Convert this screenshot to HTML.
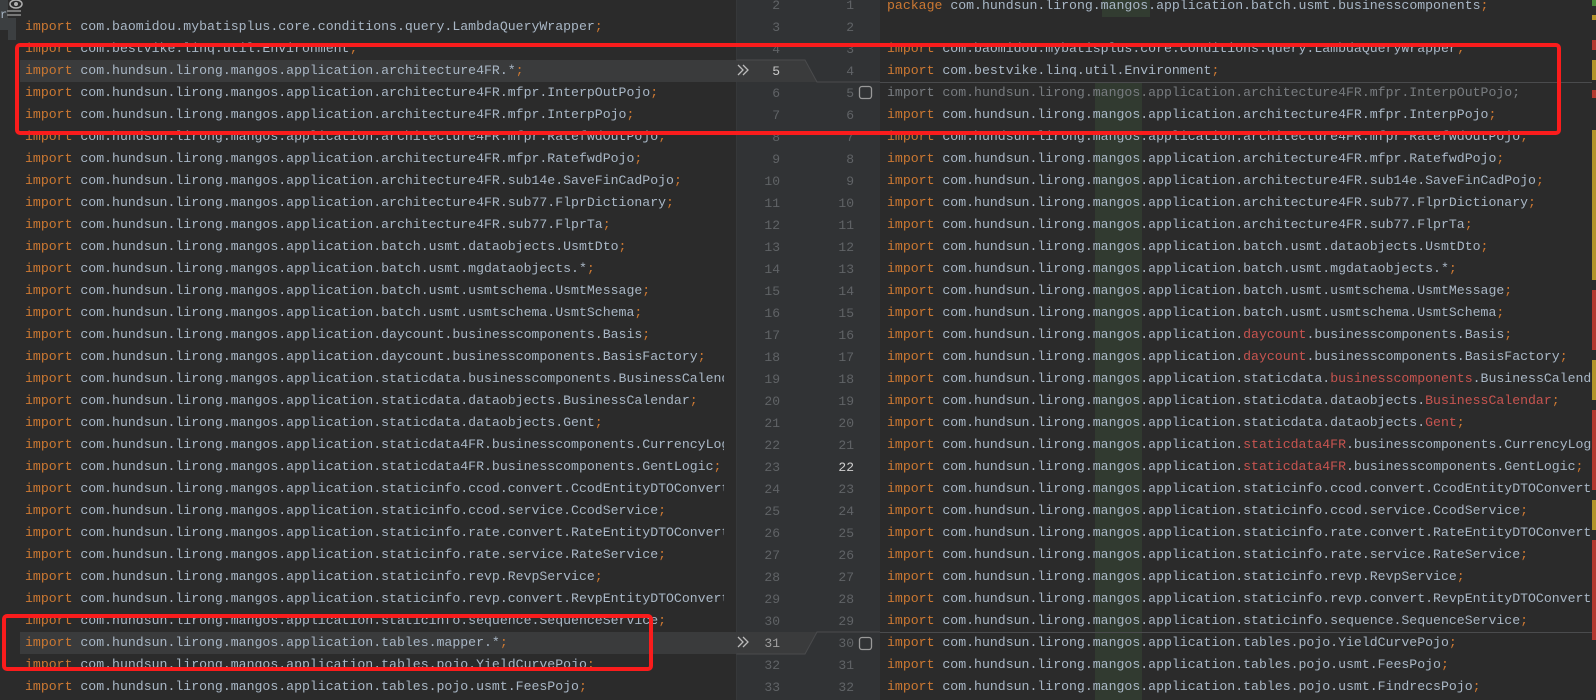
<!DOCTYPE html>
<html><head><meta charset="utf-8">
<style>
html,body{margin:0;padding:0}
body{width:1596px;height:700px;overflow:hidden;background:#2b2b2b;position:relative;font-family:"Liberation Mono",monospace;font-size:13.2px;color:#a9b7c6}
.pane{position:absolute;top:0;height:700px;overflow:hidden}
#L{left:0;width:736px;background:#2b2b2b}
#G{left:736px;width:144px;background:#313335}
#R{left:880px;width:712px;background:#2b2b2b}
.row{position:absolute;left:0;right:0;height:22px;line-height:22px;white-space:pre}
.k{color:#cc7832}.s{color:#cc7832}.r{color:#c75450}
.gray,.gray .k{color:#787c80}
.num{position:absolute;height:22px;line-height:22px;color:#606366;text-align:right;width:30px}
.hl{background:#3a3b3c}
.box{position:absolute;border:4px solid #fa1c1c;border-radius:5px;box-sizing:border-box}
.hline{position:absolute;height:1px;background:#4a4b4d}
</style></head><body>

<div class="pane" id="L">
<div style="position:absolute;left:20px;top:60px;width:716px;height:22px" class="hl"></div>
<div style="position:absolute;left:20px;top:632px;width:716px;height:22px" class="hl"></div>
<div style="position:absolute;left:25px;top:0;width:699px;height:700px;overflow:hidden">
<div class="row" style="top:16px"><span class="k">import</span> com.baomidou.mybatisplus.core.conditions.query.LambdaQueryWrapper<span class="s">;</span></div>
<div class="row" style="top:38px"><span class="k">import</span> com.bestvike.linq.util.Environment<span class="s">;</span></div>
<div class="row" style="top:60px"><span class="k">import</span> com.hundsun.lirong.mangos.application.architecture4FR.*<span class="s">;</span></div>
<div class="row" style="top:82px"><span class="k">import</span> com.hundsun.lirong.mangos.application.architecture4FR.mfpr.InterpOutPojo<span class="s">;</span></div>
<div class="row" style="top:104px"><span class="k">import</span> com.hundsun.lirong.mangos.application.architecture4FR.mfpr.InterpPojo<span class="s">;</span></div>
<div class="row" style="top:126px"><span class="k">import</span> com.hundsun.lirong.mangos.application.architecture4FR.mfpr.RatefwdOutPojo<span class="s">;</span></div>
<div class="row" style="top:148px"><span class="k">import</span> com.hundsun.lirong.mangos.application.architecture4FR.mfpr.RatefwdPojo<span class="s">;</span></div>
<div class="row" style="top:170px"><span class="k">import</span> com.hundsun.lirong.mangos.application.architecture4FR.sub14e.SaveFinCadPojo<span class="s">;</span></div>
<div class="row" style="top:192px"><span class="k">import</span> com.hundsun.lirong.mangos.application.architecture4FR.sub77.FlprDictionary<span class="s">;</span></div>
<div class="row" style="top:214px"><span class="k">import</span> com.hundsun.lirong.mangos.application.architecture4FR.sub77.FlprTa<span class="s">;</span></div>
<div class="row" style="top:236px"><span class="k">import</span> com.hundsun.lirong.mangos.application.batch.usmt.dataobjects.UsmtDto<span class="s">;</span></div>
<div class="row" style="top:258px"><span class="k">import</span> com.hundsun.lirong.mangos.application.batch.usmt.mgdataobjects.*<span class="s">;</span></div>
<div class="row" style="top:280px"><span class="k">import</span> com.hundsun.lirong.mangos.application.batch.usmt.usmtschema.UsmtMessage<span class="s">;</span></div>
<div class="row" style="top:302px"><span class="k">import</span> com.hundsun.lirong.mangos.application.batch.usmt.usmtschema.UsmtSchema<span class="s">;</span></div>
<div class="row" style="top:324px"><span class="k">import</span> com.hundsun.lirong.mangos.application.daycount.businesscomponents.Basis<span class="s">;</span></div>
<div class="row" style="top:346px"><span class="k">import</span> com.hundsun.lirong.mangos.application.daycount.businesscomponents.BasisFactory<span class="s">;</span></div>
<div class="row" style="top:368px"><span class="k">import</span> com.hundsun.lirong.mangos.application.staticdata.businesscomponents.BusinessCalendar<span class="s">;</span></div>
<div class="row" style="top:390px"><span class="k">import</span> com.hundsun.lirong.mangos.application.staticdata.dataobjects.BusinessCalendar<span class="s">;</span></div>
<div class="row" style="top:412px"><span class="k">import</span> com.hundsun.lirong.mangos.application.staticdata.dataobjects.Gent<span class="s">;</span></div>
<div class="row" style="top:434px"><span class="k">import</span> com.hundsun.lirong.mangos.application.staticdata4FR.businesscomponents.CurrencyLogic<span class="s">;</span></div>
<div class="row" style="top:456px"><span class="k">import</span> com.hundsun.lirong.mangos.application.staticdata4FR.businesscomponents.GentLogic<span class="s">;</span></div>
<div class="row" style="top:478px"><span class="k">import</span> com.hundsun.lirong.mangos.application.staticinfo.ccod.convert.CcodEntityDTOConverter<span class="s">;</span></div>
<div class="row" style="top:500px"><span class="k">import</span> com.hundsun.lirong.mangos.application.staticinfo.ccod.service.CcodService<span class="s">;</span></div>
<div class="row" style="top:522px"><span class="k">import</span> com.hundsun.lirong.mangos.application.staticinfo.rate.convert.RateEntityDTOConverter<span class="s">;</span></div>
<div class="row" style="top:544px"><span class="k">import</span> com.hundsun.lirong.mangos.application.staticinfo.rate.service.RateService<span class="s">;</span></div>
<div class="row" style="top:566px"><span class="k">import</span> com.hundsun.lirong.mangos.application.staticinfo.revp.RevpService<span class="s">;</span></div>
<div class="row" style="top:588px"><span class="k">import</span> com.hundsun.lirong.mangos.application.staticinfo.revp.convert.RevpEntityDTOConverter<span class="s">;</span></div>
<div class="row" style="top:610px"><span class="k">import</span> com.hundsun.lirong.mangos.application.staticinfo.sequence.SequenceService<span class="s">;</span></div>
<div class="row" style="top:632px"><span class="k">import</span> com.hundsun.lirong.mangos.application.tables.mapper.*<span class="s">;</span></div>
<div class="row" style="top:654px"><span class="k">import</span> com.hundsun.lirong.mangos.application.tables.pojo.YieldCurvePojo<span class="s">;</span></div>
<div class="row" style="top:676px"><span class="k">import</span> com.hundsun.lirong.mangos.application.tables.pojo.usmt.FeesPojo<span class="s">;</span></div>
</div>
<div style="position:absolute;left:0;top:0;width:8px;height:30px;background:#3c3f41"></div>
<div style="position:absolute;left:0;top:8px;color:#a9b7c6;font-size:12px">r</div>
<svg style="position:absolute;left:9px;top:0" width="14" height="10"><ellipse cx="7" cy="4" rx="6" ry="4" fill="none" stroke="#b0b0b0" stroke-width="1.5"/><circle cx="7" cy="4" r="2" fill="#b0b0b0"/></svg>
<div style="position:absolute;left:7px;top:10px;width:14px;height:2px;background:#777"></div>
<div style="position:absolute;left:7px;top:14px;width:14px;height:2px;background:#777"></div>
<div style="position:absolute;left:8px;top:18px;width:8px;height:22px;background:#3c3f41"></div>
</div>

<div class="pane" id="G">
<svg style="position:absolute;left:0;top:0" width="144" height="700">
<path d="M0 60 H69 L81 82 H0 Z" fill="#3a3b3c"/>
<path d="M0 60 H69 L81 82 H144" fill="none" stroke="#4a4b4d" stroke-width="1"/>
<path d="M0 632 H81 L69 654 H0 Z" fill="#3a3b3c"/>
<path d="M144 632 H81 L69 654 H0" fill="none" stroke="#4a4b4d" stroke-width="1"/>
<path d="M2 65 l5 5 -5 5 M7 65 l5 5 -5 5" fill="none" stroke="#bbb" stroke-width="1.3"/>
<path d="M2 637 l5 5 -5 5 M7 637 l5 5 -5 5" fill="none" stroke="#bbb" stroke-width="1.3"/>
<rect x="123.5" y="86.5" width="12" height="12" rx="2.5" fill="none" stroke="#9a9a9a" stroke-width="1.3"/>
<rect x="123.5" y="637.5" width="12" height="12" rx="2.5" fill="none" stroke="#9a9a9a" stroke-width="1.3"/>
<path d="M0 0 V700" stroke="#3c3e40"/>
</svg>
</div>

<div class="pane" id="R">
<div style="position:absolute;left:222px;top:-5px;width:48px;height:22px;background:#323c31"></div>
<div style="position:absolute;left:215px;top:83px;width:47px;height:620px;background:#313a30"></div>
<div class="hline" style="left:0;right:0;top:82px"></div>
<div class="hline" style="left:0;right:0;top:632px"></div>
<div style="position:absolute;left:7px;top:0;width:720px">
<div class="row" style="top:-5px"><span class="k">package</span> com.hundsun.lirong.mangos.application.batch.usmt.businesscomponents<span class="s">;</span></div>
<div class="row" style="top:38px"><span class="k">import</span> com.baomidou.mybatisplus.core.conditions.query.LambdaQueryWrapper<span class="s">;</span></div>
<div class="row" style="top:60px"><span class="k">import</span> com.bestvike.linq.util.Environment<span class="s">;</span></div>
<div class="row gray" style="top:82px"><span class="k">import</span> com.hundsun.lirong.mangos.application.architecture4FR.mfpr.InterpOutPojo;</div>
<div class="row" style="top:104px"><span class="k">import</span> com.hundsun.lirong.mangos.application.architecture4FR.mfpr.InterpPojo<span class="s">;</span></div>
<div class="row" style="top:126px"><span class="k">import</span> com.hundsun.lirong.mangos.application.architecture4FR.mfpr.RatefwdOutPojo<span class="s">;</span></div>
<div class="row" style="top:148px"><span class="k">import</span> com.hundsun.lirong.mangos.application.architecture4FR.mfpr.RatefwdPojo<span class="s">;</span></div>
<div class="row" style="top:170px"><span class="k">import</span> com.hundsun.lirong.mangos.application.architecture4FR.sub14e.SaveFinCadPojo<span class="s">;</span></div>
<div class="row" style="top:192px"><span class="k">import</span> com.hundsun.lirong.mangos.application.architecture4FR.sub77.FlprDictionary<span class="s">;</span></div>
<div class="row" style="top:214px"><span class="k">import</span> com.hundsun.lirong.mangos.application.architecture4FR.sub77.FlprTa<span class="s">;</span></div>
<div class="row" style="top:236px"><span class="k">import</span> com.hundsun.lirong.mangos.application.batch.usmt.dataobjects.UsmtDto<span class="s">;</span></div>
<div class="row" style="top:258px"><span class="k">import</span> com.hundsun.lirong.mangos.application.batch.usmt.mgdataobjects.*<span class="s">;</span></div>
<div class="row" style="top:280px"><span class="k">import</span> com.hundsun.lirong.mangos.application.batch.usmt.usmtschema.UsmtMessage<span class="s">;</span></div>
<div class="row" style="top:302px"><span class="k">import</span> com.hundsun.lirong.mangos.application.batch.usmt.usmtschema.UsmtSchema<span class="s">;</span></div>
<div class="row" style="top:324px"><span class="k">import</span> com.hundsun.lirong.mangos.application.<span class="r">daycount</span>.businesscomponents.Basis<span class="s">;</span></div>
<div class="row" style="top:346px"><span class="k">import</span> com.hundsun.lirong.mangos.application.<span class="r">daycount</span>.businesscomponents.BasisFactory<span class="s">;</span></div>
<div class="row" style="top:368px"><span class="k">import</span> com.hundsun.lirong.mangos.application.staticdata.<span class="r">businesscomponents</span>.BusinessCalendar<span class="s">;</span></div>
<div class="row" style="top:390px"><span class="k">import</span> com.hundsun.lirong.mangos.application.staticdata.dataobjects.<span class="r">BusinessCalendar</span><span class="s">;</span></div>
<div class="row" style="top:412px"><span class="k">import</span> com.hundsun.lirong.mangos.application.staticdata.dataobjects.<span class="r">Gent</span><span class="s">;</span></div>
<div class="row" style="top:434px"><span class="k">import</span> com.hundsun.lirong.mangos.application.<span class="r">staticdata4FR</span>.businesscomponents.CurrencyLogic<span class="s">;</span></div>
<div class="row" style="top:456px"><span class="k">import</span> com.hundsun.lirong.mangos.application.<span class="r">staticdata4FR</span>.businesscomponents.GentLogic<span class="s">;</span></div>
<div class="row" style="top:478px"><span class="k">import</span> com.hundsun.lirong.mangos.application.staticinfo.ccod.convert.CcodEntityDTOConverter<span class="s">;</span></div>
<div class="row" style="top:500px"><span class="k">import</span> com.hundsun.lirong.mangos.application.staticinfo.ccod.service.CcodService<span class="s">;</span></div>
<div class="row" style="top:522px"><span class="k">import</span> com.hundsun.lirong.mangos.application.staticinfo.rate.convert.RateEntityDTOConverter<span class="s">;</span></div>
<div class="row" style="top:544px"><span class="k">import</span> com.hundsun.lirong.mangos.application.staticinfo.rate.service.RateService<span class="s">;</span></div>
<div class="row" style="top:566px"><span class="k">import</span> com.hundsun.lirong.mangos.application.staticinfo.revp.RevpService<span class="s">;</span></div>
<div class="row" style="top:588px"><span class="k">import</span> com.hundsun.lirong.mangos.application.staticinfo.revp.convert.RevpEntityDTOConverter<span class="s">;</span></div>
<div class="row" style="top:610px"><span class="k">import</span> com.hundsun.lirong.mangos.application.staticinfo.sequence.SequenceService<span class="s">;</span></div>
<div class="row" style="top:632px"><span class="k">import</span> com.hundsun.lirong.mangos.application.tables.pojo.YieldCurvePojo<span class="s">;</span></div>
<div class="row" style="top:654px"><span class="k">import</span> com.hundsun.lirong.mangos.application.tables.pojo.usmt.FeesPojo<span class="s">;</span></div>
<div class="row" style="top:676px"><span class="k">import</span> com.hundsun.lirong.mangos.application.tables.pojo.usmt.FindrecsPojo<span class="s">;</span></div>
</div>
</div>

<div style="position:absolute;left:1592px;top:0;width:4px;height:700px;background:#2b2b2b">
<div style="position:absolute;top:0;width:4px;height:6px;background:#4c8a3c"></div>
<div style="position:absolute;top:15px;width:4px;height:5px;background:#b3932a"></div>
<div style="position:absolute;top:40px;width:4px;height:10px;background:#b3392f"></div>
<div style="position:absolute;top:60px;width:4px;height:20px;background:#b3932a"></div>
<div style="position:absolute;top:90px;width:4px;height:8px;background:#b3392f"></div>
<div style="position:absolute;top:130px;width:4px;height:150px;background:#b3932a"></div>
<div style="position:absolute;top:290px;width:4px;height:60px;background:#b3392f"></div>
<div style="position:absolute;top:360px;width:4px;height:40px;background:#b3932a"></div>
<div style="position:absolute;top:410px;width:4px;height:80px;background:#b3392f"></div>
<div style="position:absolute;top:500px;width:4px;height:30px;background:#b3932a"></div>
<div style="position:absolute;top:540px;width:4px;height:100px;background:#b3392f"></div>
</div>

<div style="position:absolute;left:736px;top:0;width:144px;height:700px;font-size:13px">
<div class="num" style="left:14px;top:-5px">2</div><div class="num" style="left:88px;top:-5px">1</div>
<div class="num" style="left:14px;top:17px">3</div><div class="num" style="left:88px;top:17px">2</div>
<div class="num" style="left:14px;top:39px">4</div><div class="num" style="left:88px;top:39px">3</div>
<div class="num" style="left:14px;top:61px;color:#c8c8c8">5</div><div class="num" style="left:88px;top:61px">4</div>
<div class="num" style="left:14px;top:83px">6</div><div class="num" style="left:88px;top:83px">5</div>
<div class="num" style="left:14px;top:105px">7</div><div class="num" style="left:88px;top:105px">6</div>
<div class="num" style="left:14px;top:127px">8</div><div class="num" style="left:88px;top:127px">7</div>
<div class="num" style="left:14px;top:149px">9</div><div class="num" style="left:88px;top:149px">8</div>
<div class="num" style="left:14px;top:171px">10</div><div class="num" style="left:88px;top:171px">9</div>
<div class="num" style="left:14px;top:193px">11</div><div class="num" style="left:88px;top:193px">10</div>
<div class="num" style="left:14px;top:215px">12</div><div class="num" style="left:88px;top:215px">11</div>
<div class="num" style="left:14px;top:237px">13</div><div class="num" style="left:88px;top:237px">12</div>
<div class="num" style="left:14px;top:259px">14</div><div class="num" style="left:88px;top:259px">13</div>
<div class="num" style="left:14px;top:281px">15</div><div class="num" style="left:88px;top:281px">14</div>
<div class="num" style="left:14px;top:303px">16</div><div class="num" style="left:88px;top:303px">15</div>
<div class="num" style="left:14px;top:325px">17</div><div class="num" style="left:88px;top:325px">16</div>
<div class="num" style="left:14px;top:347px">18</div><div class="num" style="left:88px;top:347px">17</div>
<div class="num" style="left:14px;top:369px">19</div><div class="num" style="left:88px;top:369px">18</div>
<div class="num" style="left:14px;top:391px">20</div><div class="num" style="left:88px;top:391px">19</div>
<div class="num" style="left:14px;top:413px">21</div><div class="num" style="left:88px;top:413px">20</div>
<div class="num" style="left:14px;top:435px">22</div><div class="num" style="left:88px;top:435px">21</div>
<div class="num" style="left:14px;top:457px">23</div><div class="num" style="left:88px;top:457px;color:#d0d0d0">22</div>
<div class="num" style="left:14px;top:479px">24</div><div class="num" style="left:88px;top:479px">23</div>
<div class="num" style="left:14px;top:501px">25</div><div class="num" style="left:88px;top:501px">24</div>
<div class="num" style="left:14px;top:523px">26</div><div class="num" style="left:88px;top:523px">25</div>
<div class="num" style="left:14px;top:545px">27</div><div class="num" style="left:88px;top:545px">26</div>
<div class="num" style="left:14px;top:567px">28</div><div class="num" style="left:88px;top:567px">27</div>
<div class="num" style="left:14px;top:589px">29</div><div class="num" style="left:88px;top:589px">28</div>
<div class="num" style="left:14px;top:611px">30</div><div class="num" style="left:88px;top:611px">29</div>
<div class="num" style="left:14px;top:633px;color:#a0a0a0">31</div><div class="num" style="left:88px;top:633px">30</div>
<div class="num" style="left:14px;top:655px">32</div><div class="num" style="left:88px;top:655px">31</div>
<div class="num" style="left:14px;top:677px">33</div><div class="num" style="left:88px;top:677px">32</div>
</div>

<div class="box" style="left:15px;top:43px;width:1546px;height:92px"></div>
<div class="box" style="left:2px;top:614px;width:651px;height:57px"></div>
</body></html>
